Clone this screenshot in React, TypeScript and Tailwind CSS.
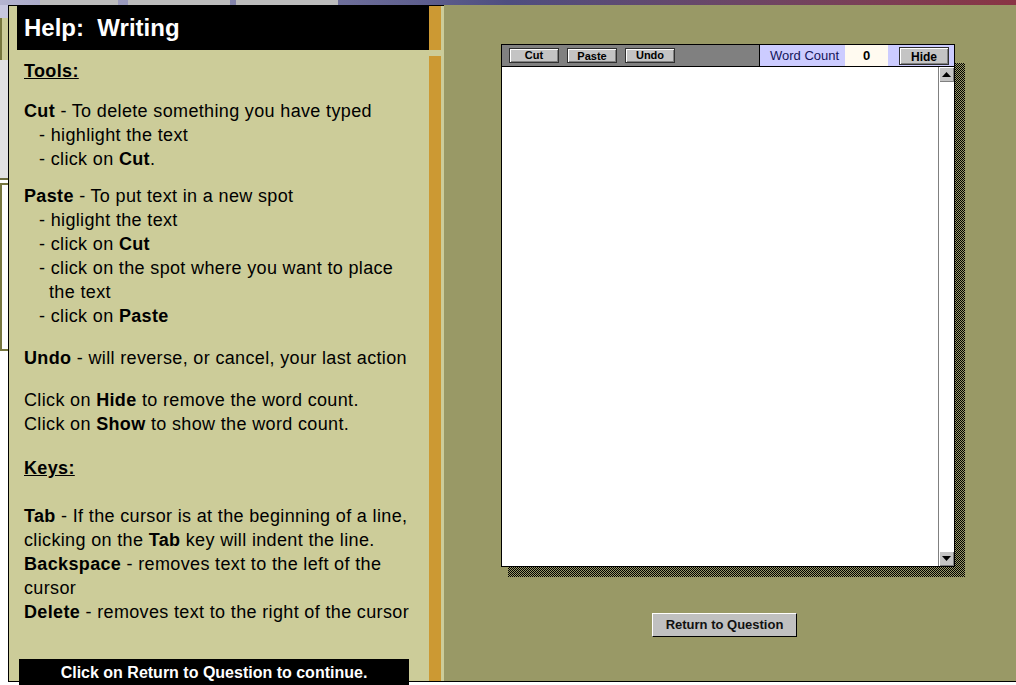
import React from 'react';

const font = "font-['Liberation_Sans',Arial,sans-serif]";

const ToolButton = ({ label, className = '' }: { label: string; className?: string }) => (
  <div
    className={`flex items-center justify-center border border-[#303030] bg-[#c4c4c4] shadow-[inset_1px_1px_0_#ffffff,inset_-1px_-1px_0_#808080] text-[11px] font-bold leading-none text-black ${className}`}
  >
    {label}
  </div>
);

const ScrollArrow = ({ down = false }: { down?: boolean }) => (
  <div className="flex h-[15px] items-center justify-center bg-[#c4c4c4] shadow-[inset_1px_1px_0_#ffffff,inset_-1px_-1px_0_#808080]">
    <svg width="9" height="5" viewBox="0 0 9 5">
      {down ? <polygon points="0,0 9,0 4.5,5" fill="#000" /> : <polygon points="0,5 9,5 4.5,0" fill="#000" />}
    </svg>
  </div>
);

const App = () => {
  return (
    <div className={`flex h-[685px] w-[1016px] flex-col overflow-hidden bg-white ${font}`}>
      {/* window behind: title strip and tabs */}
      <div className="flex h-[5px] bg-gradient-to-r from-[#b4b4d0] via-[#4e4e80] to-[#8a3444]">
        <div className="ml-[40px] w-[78px] bg-[#bcbcbc]" />
        <div className="ml-[10px] w-[102px] bg-[#bcbcbc]" />
        <div className="ml-[6px] w-[102px] bg-[#bcbcbc]" />
      </div>

      <div className="flex h-[677px]">
        {/* sliver of the page behind */}
        <div className="flex w-[8px] flex-col">
          <div className="h-[13px] bg-[#c8c8e0]" />
          <div className="h-[42px] border-l-2 border-[#77773f] bg-[#cccc99]" />
          <div className="h-[120px] border-b-2 border-[#6b6b3a] bg-[#e2e2e2]" />
          <div className="mt-[3px] h-[168px] border-2 border-r-0 border-[#77773f] bg-white" />
          <div className="flex-1 bg-white" />
        </div>

        {/* Help panel */}
        <div className="flex w-[436px] flex-col border-b border-l border-t border-black bg-[#cccc99] pl-[8px]">
          <div className="flex h-[44px]">
            <div className="flex w-[412px] items-center bg-black pl-[7px] text-[24px] font-bold whitespace-pre text-white">
              Help:  Writing
            </div>
            <div className="w-[12px] bg-[#cc9933]" />
          </div>

          <div className="mt-[6px] flex flex-1">
            <div className="flex w-[412px] flex-col">
              <div className="flex flex-col pl-[7px] pt-[3px] text-[18px] leading-[24px] tracking-[0.35px] whitespace-nowrap text-black">
                <div className="font-bold underline">Tools:</div>

                <div className="mt-[16px]">
                  <div><b>Cut</b> - To delete something you have typed</div>
                  <div className="pl-[15px]">- highlight the text</div>
                  <div className="pl-[15px]">- click on <b>Cut</b>.</div>
                </div>

                <div className="mt-[13px]">
                  <div><b>Paste</b> - To put text in a new spot</div>
                  <div className="pl-[15px]">- higlight the text</div>
                  <div className="pl-[15px]">- click on <b>Cut</b></div>
                  <div className="pl-[15px]">- click on the spot where you want to place</div>
                  <div className="pl-[25px]">the text</div>
                  <div className="pl-[15px]">- click on <b>Paste</b></div>
                </div>

                <div className="mt-[18px]"><b>Undo</b> - will reverse, or cancel, your last action</div>

                <div className="mt-[18px]">
                  <div>Click on <b>Hide</b> to remove the word count.</div>
                  <div>Click on <b>Show</b> to show the word count.</div>
                </div>

                <div className="mt-[20px] font-bold underline">Keys:</div>

                <div className="mt-[24px]">
                  <div><b>Tab</b> - If the cursor is at the beginning of a line,</div>
                  <div>clicking on the <b>Tab</b> key will indent the line.</div>
                  <div><b>Backspace</b> - removes text to the left of the</div>
                  <div>cursor</div>
                  <div><b>Delete</b> - removes text to the right of the cursor</div>
                </div>
              </div>

              <div className="relative z-10 mb-[-5px] ml-[2px] mt-auto flex h-[27px] w-[390px] items-center justify-center bg-black text-[16px] font-bold text-white">
                Click on Return to Question to continue.
              </div>
            </div>
            <div className="w-[12px] bg-[#cc9933]" />
          </div>
        </div>

        {/* Olive work area */}
        <div className="flex flex-1 flex-col border-b border-black bg-[#999966] pl-[57px] pt-[39px]">
          <div className="relative w-[454px]">
            <div className="absolute left-[7px] top-[19px] h-[514px] w-[457px] bg-[conic-gradient(#000_25%,#999966_0_50%,#000_0_75%,#999966_0)] bg-[length:2px_2px]" />

            <div className="relative flex h-[523px] flex-col border border-black bg-white">
              {/* toolbar */}
              <div className="flex h-[22px] border-b border-black">
                <div className="flex w-[258px] gap-[8px] border-r border-black bg-[#808080] pl-[7px] pt-[3px]">
                  <ToolButton label="Cut" className="h-[15px] w-[50px]" />
                  <ToolButton label="Paste" className="h-[15px] w-[50px] pt-[2px]" />
                  <ToolButton label="Undo" className="h-[15px] w-[50px]" />
                </div>
                <div className="flex flex-1 items-center bg-[#ccccff] pl-[10px]">
                  <span className="w-[75px] text-[13px] text-[#14145a]">Word Count</span>
                  <div className="flex h-full w-[43px] items-center justify-center bg-[#fffaf0] text-[13px] font-bold text-black">
                    0
                  </div>
                  <ToolButton label="Hide" className="ml-[11px] h-[18px] w-[50px] pt-[2px] text-[12px]" />
                </div>
              </div>

              {/* text area */}
              <div className="flex flex-1">
                <div className="flex-1 bg-white" />
                <div className="flex w-[16px] flex-col border-l border-[#808080] bg-white">
                  <ScrollArrow />
                  <div className="flex-1" />
                  <ScrollArrow down />
                </div>
              </div>
            </div>
          </div>

          <button
            type="button"
            className="ml-[151px] mt-[46px] flex h-[24px] w-[145px] items-center justify-center border border-b-black border-l-white border-r-black border-t-white bg-[#c0c0c0] text-[13px] font-bold text-[#111]"
          >
            Return to Question
          </button>
        </div>
      </div>
    </div>
  );
};

export default App;
